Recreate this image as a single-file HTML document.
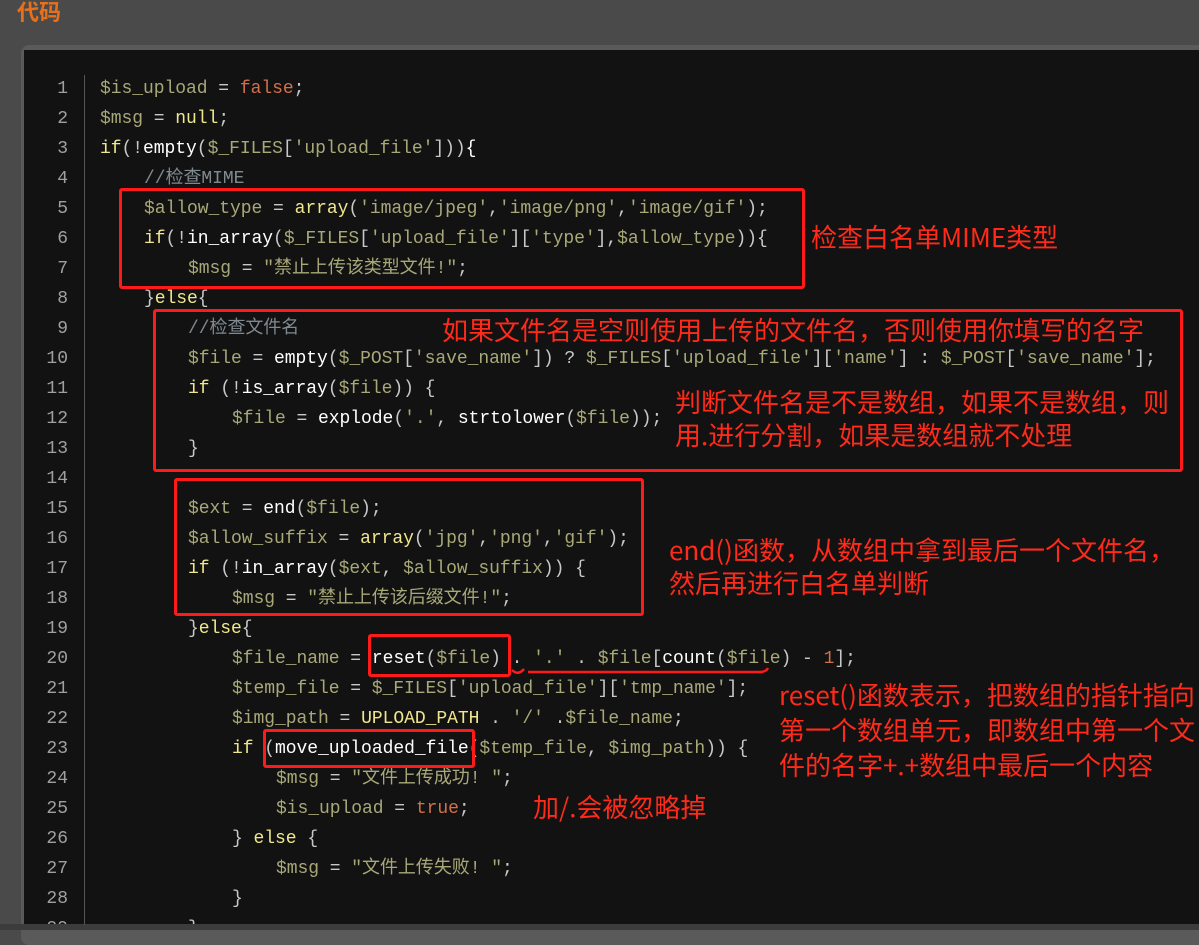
<!DOCTYPE html>
<html><head><meta charset="utf-8"><style>
body{margin:0;width:1199px;height:930px;background:#4a4a4a;overflow:hidden;position:relative;font-family:"Liberation Sans","Noto Sans CJK SC",sans-serif}
.title{position:absolute;left:17px;top:-5px;color:#e8701a;font-size:22px;font-weight:bold;font-family:"Noto Sans CJK SC",sans-serif}
.box{position:absolute;left:21px;top:45px;width:1200px;height:900px;background:#5a5a5a;border-radius:8px}
.code{position:absolute;left:24px;top:50px;width:1180px;height:875px;background:#121212}
.bot{position:absolute;left:0;top:924px;width:1199px;height:6px;background:#3c3c3c}
.sep{position:absolute;left:84px;top:75px;width:1px;height:850px;background:#555}
.ln{position:absolute;left:30px;width:38px;text-align:right;color:#a0a0a0;font:18px/30px "Liberation Mono","Noto Sans CJK SC",monospace}
.l{position:absolute;white-space:pre;color:#a8a878;font:18px/30px "Liberation Mono","Noto Sans CJK SC",monospace;letter-spacing:-0.05px}
.k{color:#f0e68c}.f{color:#fff}.o{color:#d2704a}.c{color:#7f8a90}.p{color:#c8c8c8}
.r{position:absolute;border:3px solid #ff1a1a;border-radius:3px}
.a{position:absolute;color:#ff2a1a;font-size:26px;line-height:33px;font-family:"Noto Sans CJK SC",sans-serif;white-space:nowrap}
.w{position:absolute;top:74px;left:0}
</style></head><body>
<div class="title">代码</div>
<div class="box"></div><div class="code"></div><div class="bot"></div>
<div class="sep"></div>
<div style="position:absolute;left:0;top:2px;width:1199px;height:922px;overflow:hidden">
<div class="ln" style="top:72px">1</div><div class="ln" style="top:102px">2</div><div class="ln" style="top:132px">3</div><div class="ln" style="top:162px">4</div><div class="ln" style="top:192px">5</div><div class="ln" style="top:222px">6</div><div class="ln" style="top:252px">7</div><div class="ln" style="top:282px">8</div><div class="ln" style="top:312px">9</div><div class="ln" style="top:342px">10</div><div class="ln" style="top:372px">11</div><div class="ln" style="top:402px">12</div><div class="ln" style="top:432px">13</div><div class="ln" style="top:462px">14</div><div class="ln" style="top:492px">15</div><div class="ln" style="top:522px">16</div><div class="ln" style="top:552px">17</div><div class="ln" style="top:582px">18</div><div class="ln" style="top:612px">19</div><div class="ln" style="top:642px">20</div><div class="ln" style="top:672px">21</div><div class="ln" style="top:702px">22</div><div class="ln" style="top:732px">23</div><div class="ln" style="top:762px">24</div><div class="ln" style="top:792px">25</div><div class="ln" style="top:822px">26</div><div class="ln" style="top:852px">27</div><div class="ln" style="top:882px">28</div><div class="ln" style="top:912px">29</div>

<div class="l" style="left:100px;top:72px">$is_upload <span class="p">=</span> <span class="o">false</span><span class="p">;</span></div>
<div class="l" style="left:100px;top:102px">$msg <span class="p">=</span> <span class="k">null</span><span class="p">;</span></div>
<div class="l" style="left:100px;top:132px"><span class="k">if</span><span class="p">(!</span><span class="f">empty</span><span class="p">(</span>$_FILES<span class="p">[</span>'upload_file'<span class="p">]))</span><span class="f">{</span></div>
<div class="l c" style="left:144px;top:162px">//检查MIME</div>
<div class="l" style="left:144px;top:192px">$allow_type <span class="p">=</span> <span class="k">array</span><span class="p">(</span>'image/jpeg'<span class="p">,</span>'image/png'<span class="p">,</span>'image/gif'<span class="p">);</span></div>
<div class="l" style="left:144px;top:222px"><span class="k">if</span><span class="p">(!</span><span class="f">in_array</span><span class="p">(</span>$_FILES<span class="p">[</span>'upload_file'<span class="p">][</span>'type'<span class="p">],</span>$allow_type<span class="p">)){</span></div>
<div class="l" style="left:188px;top:252px">$msg <span class="p">=</span> "禁止上传该类型文件!"<span class="p">;</span></div>
<div class="l" style="left:144px;top:282px"><span class="p">}</span><span class="k">else</span><span class="p">{</span></div>
<div class="l c" style="left:188px;top:312px">//检查文件名</div>
<div class="l" style="left:188px;top:342px">$file <span class="p">=</span> <span class="f">empty</span><span class="p">(</span>$_POST<span class="p">[</span>'save_name'<span class="p">])</span> <span class="p">?</span> $_FILES<span class="p">[</span>'upload_file'<span class="p">][</span>'name'<span class="p">]</span> <span class="p">:</span> $_POST<span class="p">[</span>'save_name'<span class="p">];</span></div>
<div class="l" style="left:188px;top:372px"><span class="k">if</span> <span class="p">(!</span><span class="f">is_array</span><span class="p">(</span>$file<span class="p">))</span> <span class="p">{</span></div>
<div class="l" style="left:232px;top:402px">$file <span class="p">=</span> <span class="f">explode</span><span class="p">(</span>'.'<span class="p">,</span> <span class="f">strtolower</span><span class="p">(</span>$file<span class="p">));</span></div>
<div class="l p" style="left:188px;top:432px">}</div>
<div class="l" style="left:188px;top:492px">$ext <span class="p">=</span> <span class="f">end</span><span class="p">(</span>$file<span class="p">);</span></div>
<div class="l" style="left:188px;top:522px">$allow_suffix <span class="p">=</span> <span class="k">array</span><span class="p">(</span>'jpg'<span class="p">,</span>'png'<span class="p">,</span>'gif'<span class="p">);</span></div>
<div class="l" style="left:188px;top:552px"><span class="k">if</span> <span class="p">(!</span><span class="f">in_array</span><span class="p">(</span>$ext<span class="p">,</span> $allow_suffix<span class="p">))</span> <span class="p">{</span></div>
<div class="l" style="left:232px;top:582px">$msg <span class="p">=</span> "禁止上传该后缀文件!"<span class="p">;</span></div>
<div class="l" style="left:188px;top:612px"><span class="p">}</span><span class="k">else</span><span class="p">{</span></div>
<div class="l" style="left:232px;top:642px">$file_name <span class="p">=</span> <span class="f">reset</span><span class="p">(</span>$file<span class="p">)</span> <span class="p">.</span> '.' <span class="p">.</span> $file<span class="p">[</span><span class="f">count</span><span class="p">(</span>$file<span class="p">)</span> <span class="p">-</span> <span class="o">1</span><span class="p">];</span></div>
<div class="l" style="left:232px;top:672px">$temp_file <span class="p">=</span> $_FILES<span class="p">[</span>'upload_file'<span class="p">][</span>'tmp_name'<span class="p">];</span></div>
<div class="l" style="left:232px;top:702px">$img_path <span class="p">=</span> <span class="k">UPLOAD_PATH</span> <span class="p">.</span> '/' <span class="p">.</span>$file_name<span class="p">;</span></div>
<div class="l" style="left:232px;top:732px"><span class="k">if</span> <span class="p">(</span><span class="f">move_uploaded_file</span><span class="p">(</span>$temp_file<span class="p">,</span> $img_path<span class="p">))</span> <span class="p">{</span></div>
<div class="l" style="left:276px;top:762px">$msg <span class="p">=</span> "文件上传成功! "<span class="p">;</span></div>
<div class="l" style="left:276px;top:792px">$is_upload <span class="p">=</span> <span class="o">true</span><span class="p">;</span></div>
<div class="l" style="left:232px;top:822px"><span class="p">}</span> <span class="k">else</span> <span class="p">{</span></div>
<div class="l" style="left:276px;top:852px">$msg <span class="p">=</span> "文件上传失败! "<span class="p">;</span></div>
<div class="l p" style="left:232px;top:882px">}</div>
<div class="l p" style="left:188px;top:912px">}</div>
</div>

<div class="r" style="left:119px;top:188px;width:680px;height:95px"></div>
<div class="r" style="left:153px;top:309px;width:1024px;height:157px"></div>
<div class="r" style="left:174px;top:478px;width:464px;height:132px"></div>
<div class="r" style="left:368px;top:634px;width:137px;height:37px"></div>
<div class="r" style="left:263px;top:729px;width:206px;height:33px"></div>
<svg style="position:absolute;left:510px;top:664px" width="260" height="14"><path d="M2 6 Q8 12 14 5 M18 8 L250 8 Q256 8 258 4" stroke="#ff1a1a" stroke-width="2.5" fill="none"/></svg>

<div class="a" style="left:811px;top:220px">检查白名单MIME类型</div>
<div class="a" style="left:442px;top:313px">如果文件名是空则使用上传的文件名，否则使用你填写的名字</div>
<div class="a" style="left:675px;top:385px">判断文件名是不是数组，如果不是数组，则<br>用.进行分割，如果是数组就不处理</div>
<div class="a" style="left:669px;top:533px">end()函数，从数组中拿到最后一个文件名，<br>然后再进行白名单判断</div>
<div class="a" style="left:779px;top:677px;line-height:35px">reset()函数表示，把数组的指针指向<br>第一个数组单元，即数组中第一个文<br>件的名字+.+数组中最后一个内容</div>
<div class="a" style="left:533px;top:790px">加/.会被忽略掉</div>
</body></html>
